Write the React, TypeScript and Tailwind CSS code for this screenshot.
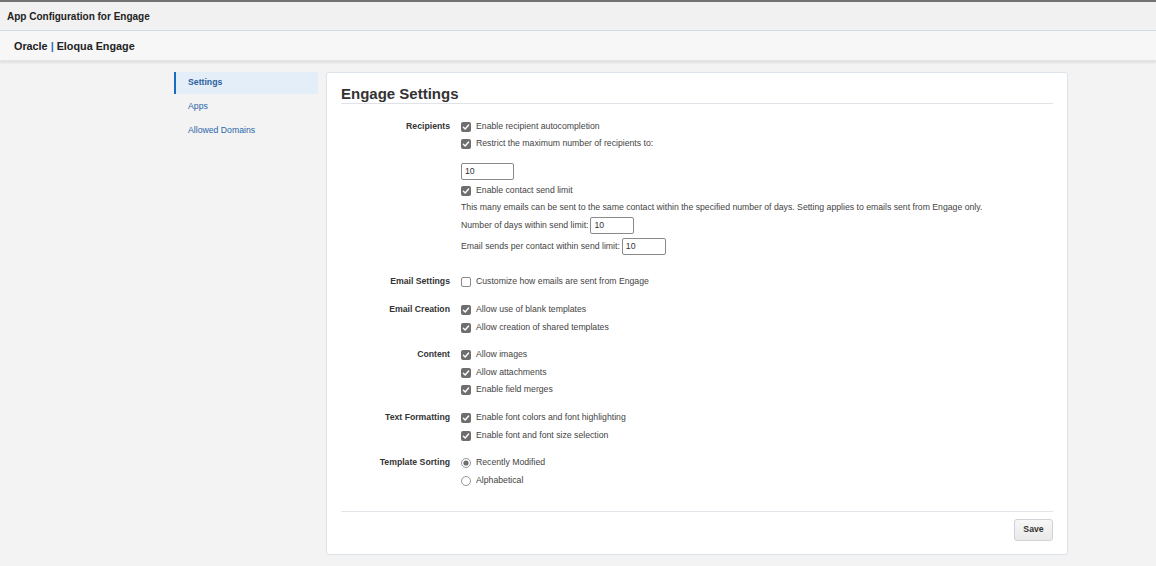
import React from "react";

const font = { fontFamily: '"Liberation Sans", Arial, sans-serif' };

function Check({ checked = true }: { checked?: boolean }) {
  if (!checked) {
    return <span className="inline-block w-[10px] h-[10px] rounded-[2px] border border-[#8a8a8a] bg-white shrink-0" />;
  }
  return (
    <svg width="10" height="10" viewBox="0 0 10 10" className="shrink-0">
      <rect x="0" y="0" width="10" height="10" rx="2" fill="#6e6e6e" />
      <path d="M2.4 5.2 L4.2 7 L7.6 3" stroke="#fff" strokeWidth="1.4" fill="none" strokeLinecap="round" strokeLinejoin="round" />
    </svg>
  );
}

function Radio({ checked }: { checked?: boolean }) {
  return (
    <svg width="10" height="10" viewBox="0 0 10 10" className="shrink-0">
      <circle cx="5" cy="5" r="4.5" fill="#fff" stroke="#8a8a8a" strokeWidth="0.9" />
      {checked && <circle cx="5" cy="5" r="2.6" fill="#6e6e6e" />}
    </svg>
  );
}

function Row({ children, className = "" }: { children: React.ReactNode; className?: string }) {
  return <div className={`h-[17px] flex items-center gap-[5px] ${className}`}>{children}</div>;
}

function Opt({ label, checked = true, className = "" }: { label: string; checked?: boolean; className?: string }) {
  return (
    <Row className={className}>
      <Check checked={checked} />
      <span>{label}</span>
    </Row>
  );
}

function Input({ w }: { w: string }) {
  return (
    <span className={`inline-flex items-center h-[17px] ${w} border border-[#8a8a8a] rounded-[2px] bg-white pl-[3px] text-[#333]`}>10</span>
  );
}

function Group({ label, children, className = "" }: { label: string; children: React.ReactNode; className?: string }) {
  return (
    <div className={`flex ${className}`}>
      <div className="w-[109px] shrink-0 text-right font-bold text-[#333] h-[17px] leading-[17px]">{label}</div>
      <div className="ml-[11px] flex flex-col">{children}</div>
    </div>
  );
}

export default function App() {
  return (
    <div style={font} className="w-[1156px] h-[566px] bg-[#f3f3f3] overflow-hidden text-[8.7px] text-[#444]">
      <div className="h-[2px] bg-[#737373]" />
      <div className="h-[29px] bg-[#f1f1f1] border-b border-[#d3dbe3] flex items-center pl-[7px] pt-[1px] text-[10px] font-bold text-[#222]">
        App Configuration for Engage
      </div>
      <div className="h-[30px] bg-[#f7f7f7] flex items-center pl-[14px] pt-[1px] text-[10.8px] font-bold text-[#222] shadow-[0_2px_2px_rgba(0,0,0,0.08)] border-b border-[#e4e4e4]">
        <span>Oracle <span className="text-[#1f6cc0]">|</span> Eloqua Engage</span>
      </div>
      <div className="flex pt-[11px] pl-[174px]">
        <div className="w-[144px] flex flex-col">
          <div className="h-[22px] mb-[2px] border-l-2 border-[#1b6ac2] bg-[#e4eef8] flex items-center pl-[12px] pb-[1px] font-bold text-[#2a5f9c]">Settings</div>
          <div className="h-[22px] mb-[2px] flex items-center pl-[14px] text-[#2a67a8]">Apps</div>
          <div className="h-[22px] flex items-center pl-[14px] text-[#2a67a8]">Allowed Domains</div>
        </div>
        <div className="ml-[8px] w-[742px] bg-white border border-[#dde3ea] rounded-[3px] px-[14px] pt-[13px] pb-[13px]">
          <div className="h-[18px] border-b border-[#dfe3e8] text-[15px] font-bold text-[#333] leading-[16px]">Engage Settings</div>
          <div className="mt-[14px]">
            <Group label="Recipients">
              <Opt label="Enable recipient autocompletion" />
              <Opt label="Restrict the maximum number of recipients to:" />
              <div className="mt-[11px]"><Input w="w-[53px]" /></div>
              <Opt label="Enable contact send limit" className="mt-[2px]" />
              <Row>This many emails can be sent to the same contact within the specified number of days. Setting applies to emails sent from Engage only.</Row>
              <Row className="mt-[1px] !gap-[2px]">
                <span>Number of days within send limit:</span>
                <Input w="w-[44px]" />
              </Row>
              <Row className="mt-[4px] !gap-[2px]">
                <span>Email sends per contact within send limit:</span>
                <Input w="w-[44px]" />
              </Row>
            </Group>
            <Group label="Email Settings" className="mt-[18px]">
              <Opt label="Customize how emails are sent from Engage" checked={false} />
            </Group>
            <Group label="Email Creation" className="mt-[11px]">
              <Opt label="Allow use of blank templates" />
              <Opt label="Allow creation of shared templates" className="mt-[1px]" />
            </Group>
            <Group label="Content" className="mt-[10px]">
              <Opt label="Allow images" />
              <Opt label="Allow attachments" className="mt-[1px]" />
              <Opt label="Enable field merges" />
            </Group>
            <Group label="Text Formatting" className="mt-[11px]">
              <Opt label="Enable font colors and font highlighting" />
              <Opt label="Enable font and font size selection" className="mt-[1px]" />
            </Group>
            <Group label="Template Sorting" className="mt-[10px]">
              <Row><Radio checked /><span>Recently Modified</span></Row>
              <Row className="mt-[1px]"><Radio /><span>Alphabetical</span></Row>
            </Group>
          </div>
          <div className="mt-[22px] border-t border-[#e1e5ea]" />
          <div className="mt-[7px] flex justify-end">
            <button className="h-[22px] w-[39px] rounded-[3px] border border-[#cfd3d7] bg-gradient-to-b from-[#f7f7f7] to-[#e9e9e9] font-bold text-[#333] text-[8.7px]">Save</button>
          </div>
        </div>
      </div>
    </div>
  );
}
